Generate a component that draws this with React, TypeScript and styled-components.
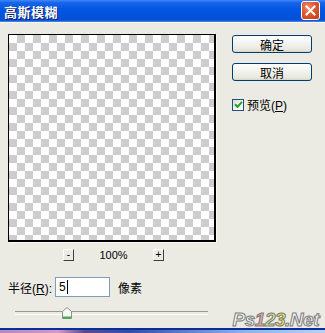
import React from 'react'
import styled, { createGlobalStyle } from 'styled-components'

const GlobalStyle = createGlobalStyle`
  html, body {
    margin: 0;
    padding: 0;
    background: #ebebe4;
  }
  * { box-sizing: border-box; }
`

const Window = styled.div`
  position: relative;
  width: 325px;
  height: 333px;
  overflow: hidden;
  display: flex;
  flex-direction: column;
  background: #ebebe4;
  font-family: 'Liberation Sans', 'Noto Sans CJK SC', sans-serif;
  font-size: 12px;
  color: #000;
`

const TitleBar = styled.div`
  height: 22px;
  flex: none;
  display: flex;
  align-items: center;
  justify-content: space-between;
  padding: 0 5px 0 4px;
  background: linear-gradient(
    180deg,
    #3d8af7 0%,
    #1a64ea 12%,
    #0457e3 40%,
    #0152db 75%,
    #0a4fd0 92%,
    #5b8fe6 100%
  );
`

const TitleText = styled.div`
  color: #fff;
  font-family: 'Noto Sans CJK SC', sans-serif;
  font-weight: 700;
  font-size: 13px;
  letter-spacing: 0.5px;
  text-shadow: 1px 1px 0 #0a1a66;
  line-height: 1;
`

const CloseButton = styled.div`
  width: 19px;
  height: 19px;
  margin-top: -2px;
  border: 1px solid #fff;
  border-radius: 3px;
  background: radial-gradient(circle at 35% 30%, #f28a66 0%, #e0562e 45%, #c43a14 100%);
  display: flex;
  align-items: center;
  justify-content: center;
`

const Body = styled.div`
  flex: 1;
  display: flex;
  padding: 11px 0 0 8px;
  border-top: 1px solid #f6f6f2;
`

const LeftColumn = styled.div`
  width: 210px;
  display: flex;
  flex-direction: column;
`

const RightColumn = styled.div`
  display: flex;
  flex-direction: column;
  margin-left: 14px;
  padding-top: 1px;
`

const Preview = styled.div`
  width: 208px;
  height: 208px;
  border-top: 1px solid #000;
  border-left: 1px solid #000;
  border-right: 2px solid #000;
  border-bottom: 2px solid #000;
  box-shadow: 1px 1px 0 #fafaf6;
  background: repeating-conic-gradient(#cdcdcd 0 25%, #ffffff 0 50%) 0 0 / 16px 16px;
`

const ZoomRow = styled.div`
  display: flex;
  align-items: center;
  margin-top: 7px;
  padding-left: 55px;
  height: 12px;
`

const ZoomButton = styled.div`
  width: 11px;
  height: 12px;
  border-top: 1px solid #fff;
  border-left: 1px solid #fff;
  border-right: 1px solid #404040;
  border-bottom: 1px solid #404040;
  display: flex;
  align-items: center;
  justify-content: center;
  font-family: 'Liberation Sans', sans-serif;
  font-size: 10px;
  line-height: 1;
`

const ZoomValue = styled.div`
  width: 79px;
  text-align: center;
  font-family: 'Liberation Sans', sans-serif;
  font-size: 11px;
`

const RadiusRow = styled.div`
  display: flex;
  align-items: center;
  margin-top: 16px;
  height: 20px;
`

const Label = styled.span`
  font-family: 'Liberation Sans', 'Noto Sans CJK SC', sans-serif;
  font-size: 12px;
  white-space: nowrap;
`

const Underline = styled.span`
  text-decoration: underline;
`

const Field = styled.div`
  width: 55px;
  height: 20px;
  margin-left: 3px;
  border: 1px solid #7f9db9;
  background: #fff;
  display: flex;
  align-items: center;
  padding-left: 3px;
  font-size: 12px;
`

const Caret = styled.span`
  display: inline-block;
  width: 1px;
  height: 14px;
  margin-left: 1px;
  background: #000;
`

const Unit = styled(Label)`
  margin-left: 8px;
`

const SliderTrack = styled.div`
  position: relative;
  margin: 10px 0 0 7px;
  width: 193px;
  height: 12px;
  display: flex;
  align-items: center;

  &::before {
    content: '';
    display: block;
    width: 100%;
    height: 2px;
    border-top: 1px solid #9d9a8c;
    border-bottom: 1px solid #fff;
  }
`

const SliderThumb = styled.svg`
  position: absolute;
  left: 47px;
  top: 0;
`

const DialogButton = styled.div`
  width: 80px;
  height: 18px;
  border: 1px solid #003c74;
  border-radius: 3px;
  background: linear-gradient(180deg, #ffffff 0%, #f4f4f0 40%, #e8e7e0 85%, #d8d4c8 100%);
  display: flex;
  align-items: center;
  justify-content: center;
  font-family: 'Noto Sans CJK SC', sans-serif;
  font-size: 12px;
  margin-bottom: 10px;
`

const CheckRow = styled.div`
  display: flex;
  align-items: center;
  margin-top: 7px;
  height: 13px;
`

const CheckBox = styled.div`
  width: 12px;
  height: 12px;
  border: 1px solid #1c5180;
  background: linear-gradient(135deg, #dcdcd6 0%, #fff 80%);
  display: flex;
  align-items: center;
  justify-content: center;
  margin-right: 3px;
`

const BottomFrame = styled.div`
  height: 5px;
  flex: none;
  border-top: 2px solid #0c2e9a;
  background: linear-gradient(90deg, #b38ac0 0%, #d09ac8 18%, #5a4a90 26%, #2f4fa8 40%, #8fb2ea 75%, #b9d0f4 100%);
`

const Watermark = styled.div`
  position: absolute;
  right: 6px;
  bottom: 4px;
  font-family: 'Liberation Sans', sans-serif;
  font-weight: 700;
  font-style: italic;
  font-size: 19px;
  line-height: 1;
  letter-spacing: -0.5px;
  color: #f4f4f4;
  -webkit-text-stroke: 1px #7c7c7c;
`

const Digit = styled.span<{ $tone: string }>`
  color: ${(p) => p.$tone};
`

export default function App() {
  return (
    <Window>
      <GlobalStyle />
      <TitleBar>
        <TitleText>高斯模糊</TitleText>
        <CloseButton>
          <svg width="11" height="11" viewBox="0 0 11 11">
            <path d="M1.5 1.5 L9.5 9.5 M9.5 1.5 L1.5 9.5" stroke="#fff" strokeWidth="2" strokeLinecap="square" />
          </svg>
        </CloseButton>
      </TitleBar>

      <Body>
        <LeftColumn>
          <Preview />
          <ZoomRow>
            <ZoomButton>-</ZoomButton>
            <ZoomValue>100%</ZoomValue>
            <ZoomButton>+</ZoomButton>
          </ZoomRow>
          <RadiusRow>
            <Label>
              半径(<Underline>R</Underline>):
            </Label>
            <Field>
              5<Caret />
            </Field>
            <Unit>像素</Unit>
          </RadiusRow>
          <SliderTrack>
            <SliderThumb width="10" height="12" viewBox="0 0 10 12">
              <path d="M0.5 11.5 V4.5 L5 0.5 L9.5 4.5 V11.5 Z" fill="#f8f8f4" stroke="#8a8f8a" />
              <path d="M1 10.5 H9" stroke="#3fb14a" strokeWidth="2" />
            </SliderThumb>
          </SliderTrack>
        </LeftColumn>

        <RightColumn>
          <DialogButton>确定</DialogButton>
          <DialogButton>取消</DialogButton>
          <CheckRow>
            <CheckBox>
              <svg width="9" height="9" viewBox="0 0 9 9">
                <path d="M1 4.2 L3.5 6.8 L8 1.8" fill="none" stroke="#21a121" strokeWidth="2" />
              </svg>
            </CheckBox>
            <Label>
              预览(<Underline>P</Underline>)
            </Label>
          </CheckRow>
        </RightColumn>
      </Body>

      <BottomFrame />

      <Watermark>
        Ps<Digit $tone="#f2a4a8">1</Digit>
        <Digit $tone="#cfe88a">2</Digit>
        <Digit $tone="#f4e64a">3</Digit>.Net
      </Watermark>
    </Window>
  )
}
